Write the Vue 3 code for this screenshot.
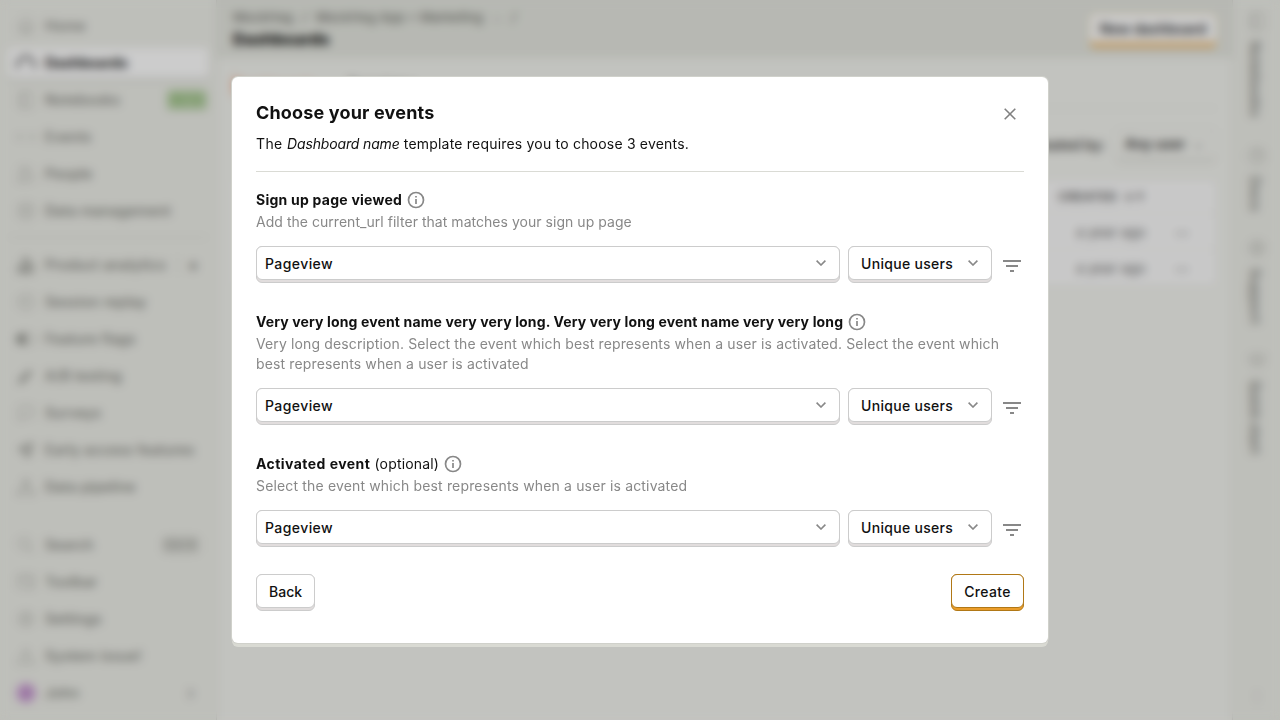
<script setup>
const icons = {
  home: 'M3 10 12 3l9 7M5 9v11h14V9M9 20v-6h6v6',
  gauge: 'M3 19A10 10 0 1 1 21 19',
  notebook: 'M5 3h14v18H5zM8 3v18',
  live: 'M3 8v8M6 9l-3 3 3 3M18 9l3 3-3 3M21 8v8M12 11v2',
  people: 'M9 11a4 4 0 1 0 0-8 4 4 0 0 0 0 8M2 21c0-9 14-9 14 0zM16 4a4 4 0 0 1 0 7M18 14c3 1 4 4 4 7',
  database: 'M4 6c0-4 16-4 16 0v12c0 4-16 4-16 0zM4 6c0 4 16 4 16 0M4 12c0 4 16 4 16 0',
  chart: 'M3 21v-7h5v7zM9 21V4h5v17zM15 21V11h5v10z',
  play: 'M12 3a9 9 0 1 0 0 18 9 9 0 0 0 0-18M3 12h4M12 7v5l3 2',
  toggle: 'M7 6h10a6 6 0 0 1 0 12H7A6 6 0 0 1 7 6',
  knob: 'M7 6h4v12H7A6 6 0 0 1 7 6',
  test: 'M17 5 5 17c-3 3 0 5 2 2L19 7M8 14h6M7 16h4',
  chat: 'M4 4h16v13H9l-5 4z',
  rocket: 'M20 4c-6 0-9 4-12 8l4 4c5-3 8-6 8-12M8 12H4l4-4h4M13 17v3l4-4v-4',
  pipeline: 'M12 3v7M9 3h6v6H9zM12 10 4 18M12 10l8 8M2 17h6v5H2zM16 17h6v5h-6z',
  search: 'M10 3a7 7 0 1 0 0 14 7 7 0 0 0 0-14M15 15l6 6',
  toolbar: 'M3 4h18v15H3zM3 8h18M16 14l4 6',
  gear: 'M12 3l3 2 4 1 1 4 1 2-2 3-1 4-4 1-2 1-3-2-4-1-1-4-1-2 2-3 1-4 4-1zM12 8a4 4 0 1 0 0 8 4 4 0 0 0 0-8',
  warning: 'M12 3 22 21H2zM12 9v6M12 17v1',
  help: 'M12 3a9 9 0 1 0 0 18 9 9 0 0 0 0-18M9 10c0-4 6-4 6 0 0 2-3 2-3 4M12 16v1',
  edu: 'M2 9l10-5 10 5-10 5zM6 11v6c3 3 9 3 12 0v-6',
}
const groups = [
  { name: 'project', items: [
    { icon: 'home', label: 'Home' },
    { icon: 'gauge', label: 'Dashboards', active: true },
    { icon: 'notebook', label: 'Notebooks', beta: 'BETA' },
    { icon: 'live', label: 'Events' },
    { icon: 'people', label: 'People' },
    { icon: 'database', label: 'Data management' },
  ] },
  { name: 'products', items: [
    { icon: 'chart', label: 'Product analytics', plus: true, solid: true },
    { icon: 'play', label: 'Session replay' },
    { icon: 'toggle', label: 'Feature flags', knob: true },
    { icon: 'test', label: 'A/B testing', solid: true },
    { icon: 'chat', label: 'Surveys' },
    { icon: 'rocket', label: 'Early access features', solid: true },
    { icon: 'pipeline', label: 'Data pipeline' },
  ] },
  { name: 'tools', items: [
    { icon: 'search', label: 'Search', keys: 'Ctrl K' },
    { icon: 'toolbar', label: 'Toolbar' },
    { icon: 'gear', label: 'Settings' },
    { icon: 'warning', label: 'System issue!' },
    { label: 'John', avatar: 'J' },
  ] },
]
const rail = [
  { icon: 'notebook', label: 'Notebooks', size: 'a' },
  { icon: 'help', label: 'Docs', size: 'b' },
  { icon: 'gear', label: 'Support', size: 'c' },
  { icon: 'edu', label: 'Quick start', size: 'd' },
]
const events = [
  { id: 'signup', name: 'Sign up page viewed', text: 'Add the current_url filter that matches your sign up page' },
  { id: 'long', name: 'Very very long event name very very long. Very very long event name very very long', text: 'Very long description. Select the event which best represents when a user is activated. Select the event which best represents when a user is activated' },
  { id: 'activated', name: 'Activated event', optional: true, text: 'Select the event which best represents when a user is activated' },
]
</script>

<template>
  <div class="screen">
    <div class="app">
      <nav class="sidebar">
        <ul v-for="g in groups" :key="g.name" :class="g.name">
          <li v-for="i in g.items" :key="i.label" :class="{ active: i.active }">
            <span v-if="i.avatar" class="avatar">{{ i.avatar }}</span>
            <svg v-else viewBox="0 0 24 24" class="nav-icon" :class="{ solid: i.solid }">
              <path :d="icons[i.icon]" />
              <path v-if="i.knob" class="knob" :d="icons.knob" />
            </svg>
            <span class="nav-label">{{ i.label }}</span>
            <span v-if="i.beta" class="beta">{{ i.beta }}</span>
            <span v-if="i.keys" class="keys">{{ i.keys }}</span>
            <span v-if="i.plus" class="plus">+</span>
            <span v-if="i.avatar" class="caret">›</span>
          </li>
        </ul>
      </nav>
      <main class="main">
        <header class="topbar">
          <div>
            <div class="crumbs"><span>MockHog</span><i>/</i><span>MockHog App + Marketing</span><i class="dim">⌄</i><i>/</i></div>
            <h1>Dashboards</h1>
          </div>
          <button class="new">New dashboard</button>
        </header>
        <section class="content">
          <div class="tabs"><b>Dashboards</b><span>Templates</span></div>
          <div class="filters"><span>Created by:</span><div class="any">Any user <i>⌄</i></div></div>
          <div class="table">
            <div class="tr head"><span>CREATED &nbsp;↓↑</span></div>
            <div v-for="n in 2" :key="n" class="tr"><span>a year ago</span><b>•••</b></div>
          </div>
        </section>
      </main>
      <aside class="rail">
        <div v-for="r in rail" :key="r.label" class="rail-item" :class="r.size">
          <svg viewBox="0 0 24 24" class="nav-icon"><path :d="icons[r.icon]" /></svg>
          <span>{{ r.label }}</span>
        </div>
        <span class="more">⋮</span>
      </aside>
    </div>

    <div class="overlay">
      <div class="modal" role="dialog">
        <header class="modal-head">
          <div>
            <h2>Choose your events</h2>
            <p><span class="lead">The </span><em>Dashboard name</em> template requires you to choose 3 events.</p>
          </div>
          <svg class="close" viewBox="0 0 12 12"><path d="M.7.7l10.6 10.6M11.3.7.7 11.3" /></svg>
        </header>
        <div v-for="e in events" :key="e.id" class="event" :class="e.id">
          <div class="label">
            <span><b>{{ e.name }}</b><template v-if="e.optional"> (optional)</template></span>
            <svg class="info" viewBox="0 0 18 18"><circle cx="9" cy="9" r="7.5" /><path d="M9 8v5M9 5v1.6" /></svg>
          </div>
          <p class="desc">{{ e.text }}</p>
          <div class="controls">
            <button class="btn select wide"><span>Pageview</span><svg viewBox="0 0 10 6"><path d="M.6.6 5 5 9.4.6" /></svg></button>
            <button class="btn select"><span>Unique users</span><svg viewBox="0 0 10 6"><path d="M.6.6 5 5 9.4.6" /></svg></button>
            <svg class="filter" viewBox="0 0 18 12"><path d="M0 0h18v2H0zM3 5h12v2H3zM7 10h4v2H7z" /></svg>
          </div>
        </div>
        <footer>
          <button class="btn">Back</button>
          <button class="btn primary">Create</button>
        </footer>
      </div>
    </div>
  </div>
</template>

<style>
body { margin: 0; overflow: hidden; }
</style>
<style scoped>
* { box-sizing: border-box; }
.screen { position: relative; width: 1280px; height: 720px; overflow: hidden; font: 14px/20px Inter, sans-serif; color: #111; }
h1, h2, p, ul { margin: 0; padding: 0; }
button { font: inherit; color: inherit; }
.app { display: flex; height: 720px; background: #f3f4ef; }
.sidebar { width: 217px; flex: none; background: #eeefe9; border-right: 1px solid #dadbd5; padding: 8px 8px 0; }
ul { list-style: none; display: flex; flex-direction: column; gap: 1px; }
.products { margin-top: 8px; padding-top: 9px; border-top: 1px solid #dadbd5; }
.tools { margin-top: 22px; }
li { height: 36px; display: flex; align-items: center; padding: 0 8px; color: #7c7d78; font-weight: 500; letter-spacing: .27px; border-radius: 4px; }
li.active { height: 30px; margin: 3px 0; background: #fff; color: #222; font-weight: 700; letter-spacing: 0; box-shadow: 0 3px 0 #dadbd5; }
.nav-icon { width: 20px; height: 20px; flex: none; fill: none; stroke: #b4b5af; stroke-width: 1.5; }
.active .nav-icon { stroke: #444; stroke-width: 2.8; }
.nav-icon.solid { stroke: #8b8c86; stroke-width: 2; }
.knob { fill: #94958f; stroke: #94958f; }
.nav-label { margin-left: 9px; white-space: nowrap; }
.beta { margin-left: auto; margin-right: -7px; padding: 0 4px; background: #b9d2a8; color: #8cba70; font-size: 12px; font-weight: 600; border-radius: 3px; }
.keys { margin-left: auto; padding: 0 2px; margin-right: 1px; background: #dadbd5; color: #999a94; font-size: 12px; line-height: 18px; border-radius: 3px; letter-spacing: .1px; }
.plus { margin-left: auto; padding-left: 8px; border-left: 1px solid #dadbd5; font-size: 20px; }
.caret { margin-left: auto; margin-right: 5px; font-size: 20px; color: #999; }
.avatar { width: 20px; height: 20px; line-height: 20px; border-radius: 50%; background: #cfa4d8; color: #9a68a5; text-align: center; font-size: 12px; font-weight: 700; }
.main { flex: 1; min-width: 0; }
.topbar { height: 58px; background: #e5e7e0; display: flex; justify-content: space-between; padding: 7px 15px 0 16px; }
.crumbs { display: flex; gap: 9px; font-size: 13px; font-weight: 500; color: #73746f; line-height: 20px; }
.crumbs .dim { opacity: .5; }
h1 { font-size: 16px; line-height: 24px; font-weight: 800; letter-spacing: .1px; }
.new { width: 128px; height: 35px; margin-top: 6px; border: 1px solid #f0d7aa; border-bottom: 6px solid #eebf7b; border-radius: 6px; background: #fff; color: #333; font-weight: 600; padding: 2px 0 0; }
.content { padding: 18px 15px 0 16px; }
.tabs { height: 33px; display: flex; gap: 32px; border-bottom: 1px solid #e2e3de; }
.tabs b { color: #f78a5c; font-weight: 500; border-left: 2px solid #f7a080; height: 20px; }
.filters { display: flex; justify-content: flex-end; align-items: center; gap: 10px; height: 36px; margin-top: 18px; font-weight: 500; color: #333; }
.any { width: 102px; height: 34px; padding: 5px 9px; border: 1px solid #e3e3df; border-bottom: 3px solid #dadbd5; border-radius: 6px; font-weight: 600; white-space: nowrap; }
.any i { color: #aaa; padding-left: 4px; }
.table { margin-top: 16px; background: #fbfbfb; border: 1px solid #e6e6e2; border-radius: 4px; }
.tr { height: 36px; display: flex; align-items: center; justify-content: flex-end; gap: 29px; padding-right: 27px; border-top: 1px solid #eaeae6; color: #666; }
.tr b { font-size: 10px; color: #999; }
.head { height: 33px; border: 0; font-size: 12px; font-weight: 700; padding-right: 70px; letter-spacing: .4px; }
.rail { width: 48px; flex: none; background: #eeefe9; border-left: 1px solid #dadbd5; display: flex; flex-direction: column; align-items: center; padding-top: 11px; }
.rail-item { display: flex; flex-direction: column; align-items: center; gap: 10px; font-weight: 600; color: #858681; }
.rail-item span { writing-mode: vertical-rl; letter-spacing: .3px; margin-right: 4px; }
.rail-item:last-of-type span { letter-spacing: 0; }
.a { height: 135px; }
.b { height: 92px; }
.c { height: 112px; }
.more { margin-top: auto; padding-bottom: 14px; color: #aaa; }
.overlay { position: absolute; inset: 0; background: #0003; backdrop-filter: blur(5px); display: flex; justify-content: center; align-items: flex-start; padding-top: 77px; }
.modal { width: 816px; height: 566px; padding: 24px; background: #fff; border-radius: 6px; box-shadow: 0 0 0 1px #d0d1cb, 0 4px 0 #d9dad3; }
.modal-head { height: 71px; border-bottom: 1px solid #dadbd5; display: flex; justify-content: space-between; margin-bottom: 18px; }
h2 { font-size: 18px; line-height: 24px; font-weight: 700; letter-spacing: .17px; }
.modal-head p { margin-top: 9px; letter-spacing: .2px; }
.modal-head .lead { letter-spacing: .4px; }
.modal-head em { letter-spacing: -.15px; }
.close { width: 12px; height: 12px; margin: 7px 8px 0 0; fill: none; stroke: #808080; stroke-width: 1.6; }
.event { margin-bottom: 29px; }
.label { display: flex; align-items: center; gap: 5px; height: 20px; }
.label b { font-weight: 700; }
.info { width: 18px; height: 18px; fill: none; stroke: #888; stroke-width: 1.7; }
.desc { color: #888; margin-top: 2px; }
.signup b { letter-spacing: .24px; }
.signup .desc { letter-spacing: .035px; }
.long b { letter-spacing: .135px; }
.long .desc { letter-spacing: .132px; }
.activated .desc { letter-spacing: .155px; }
.activated b { letter-spacing: .45px; }
.activated .label { letter-spacing: .18px; }
.controls { display: flex; gap: 8px; height: 37px; margin-top: 14px; }
.btn { position: relative; z-index: 0; height: 34px; padding: 2px 12px 0; background: #fff; border: 1px solid #ccc; border-radius: 6px; font-weight: 500; --lip: #e1dddd; --edge: #ccc; }
.btn::before { content: ''; position: absolute; z-index: -2; inset: 3px -1px -4px; background: var(--lip); border: 1px solid var(--edge); border-radius: 6px; }
.btn::after { content: ''; position: absolute; z-index: -1; inset: -1px; background: #fff; border: 1px solid var(--edge); border-radius: 6px; }
.select { width: 144px; display: flex; justify-content: space-between; align-items: center; padding-right: 13px; letter-spacing: .3px; }
.select svg { width: 10px; height: 6px; margin-bottom: 3px; fill: none; stroke: #888; stroke-width: 1.6; }
.wide { width: 584px; padding-left: 8px; letter-spacing: .42px; }
.filter { width: 18px; height: 12px; margin: 14px 0 0 3px; fill: #888; }
footer { display: flex; justify-content: space-between; margin-top: -2px; }
.primary { border-color: #b17816; --edge: #b17816; --lip: #eb9d2a; width: 73px; letter-spacing: .35px; }
</style>
